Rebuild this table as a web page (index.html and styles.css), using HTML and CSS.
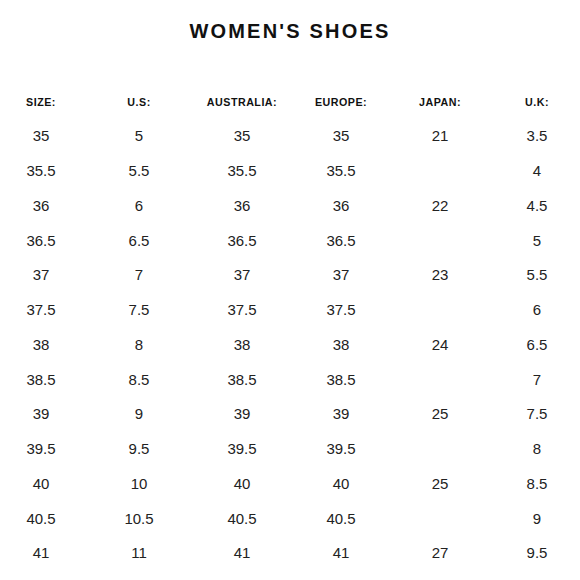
FILE: index.html
```html
<!DOCTYPE html>
<html>
<head>
<meta charset="utf-8">
<link rel="stylesheet" href="styles.css">
</head>
<body>
<h1 class="title">WOMEN'S SHOES</h1>
<div class="chart">
  <div class="row head">
    <span>SIZE:</span><span>U.S:</span><span>AUSTRALIA:</span><span>EUROPE:</span><span>JAPAN:</span><span>U.K:</span>
  </div>
  <div class="row"><span>35</span><span>5</span><span>35</span><span>35</span><span>21</span><span>3.5</span></div>
  <div class="row"><span>35.5</span><span>5.5</span><span>35.5</span><span>35.5</span><span></span><span>4</span></div>
  <div class="row"><span>36</span><span>6</span><span>36</span><span>36</span><span>22</span><span>4.5</span></div>
  <div class="row"><span>36.5</span><span>6.5</span><span>36.5</span><span>36.5</span><span></span><span>5</span></div>
  <div class="row"><span>37</span><span>7</span><span>37</span><span>37</span><span>23</span><span>5.5</span></div>
  <div class="row"><span>37.5</span><span>7.5</span><span>37.5</span><span>37.5</span><span></span><span>6</span></div>
  <div class="row"><span>38</span><span>8</span><span>38</span><span>38</span><span>24</span><span>6.5</span></div>
  <div class="row"><span>38.5</span><span>8.5</span><span>38.5</span><span>38.5</span><span></span><span>7</span></div>
  <div class="row"><span>39</span><span>9</span><span>39</span><span>39</span><span>25</span><span>7.5</span></div>
  <div class="row"><span>39.5</span><span>9.5</span><span>39.5</span><span>39.5</span><span></span><span>8</span></div>
  <div class="row"><span>40</span><span>10</span><span>40</span><span>40</span><span>25</span><span>8.5</span></div>
  <div class="row"><span>40.5</span><span>10.5</span><span>40.5</span><span>40.5</span><span></span><span>9</span></div>
  <div class="row"><span>41</span><span>11</span><span>41</span><span>41</span><span>27</span><span>9.5</span></div>
</div>
</body>
</html>
```

FILE: styles.css
```css
html, body {
  margin: 0;
  padding: 0;
  background: #ffffff;
  overflow: hidden;
}
body {
  font-family: "Liberation Sans", Arial, sans-serif;
  color: #222222;
  width: 580px;
  height: 580px;
}
.title {
  margin: 0;
  padding-top: 19px;
  height: 24px;
  line-height: 24px;
  font-size: 20px;
  font-weight: bold;
  letter-spacing: 2.2px;
  text-align: center;
  color: #111111;
}
.chart {
  padding-top: 42px;
}
.row {
  display: grid;
  grid-template-columns: 82px 114px 92px 106px 92px 94px;
  height: 34.75px;
  align-items: center;
  justify-items: center;
  font-size: 15px;
}
.row span:last-child {
  padding-left: 8px;
}
.head {
  height: 33.5px;
  font-size: 10.7px;
  font-weight: bold;
  letter-spacing: 0.5px;
  color: #111111;
}
```
